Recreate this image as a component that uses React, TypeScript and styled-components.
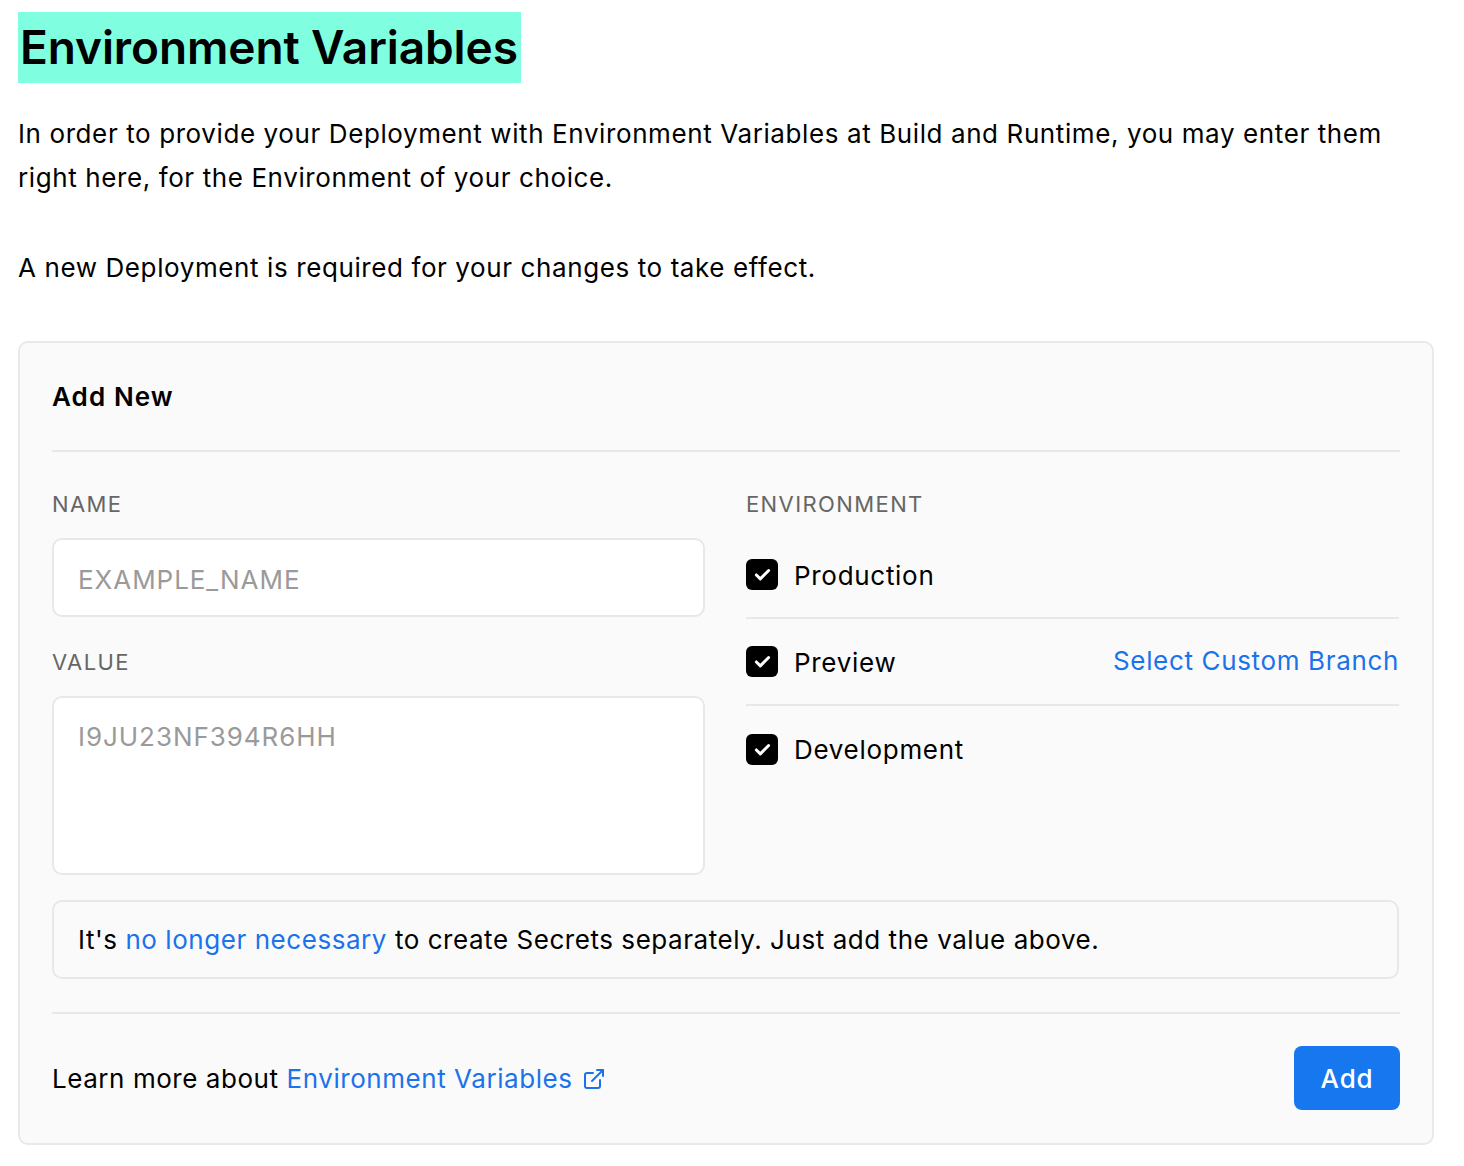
import React from "react";
import styled, { createGlobalStyle } from "styled-components";
import { ExternalLink } from "lucide-react";

const Global = createGlobalStyle`
  html, body { margin: 0; padding: 0; background: #fff; }
  body { font-family: Inter, "Noto Sans", sans-serif; color: #000; -webkit-font-smoothing: antialiased; }
  * { box-sizing: border-box; }
`;

const Page = styled.div`
  padding: 12px 0 0 18px;
  width: 1434px;
`;

const Title = styled.h1`
  display: inline-block;
  margin: 0;
  background: #7fffdf;
  font-size: 46px;
  font-weight: 600;
  line-height: 71px;
  letter-spacing: -0.1px;
  padding: 0 3px 0 2px;
`;

const Intro = styled.p`
  margin: 29px 0 0;
  font-size: 26px;
  line-height: 44px;
  letter-spacing: 0.6px;
  & + & { margin-top: 46px; }
`;

const Card = styled.section`
  margin-top: 51px;
  border: 2px solid #e9e9e9;
  border-radius: 10px;
  background: #fafafa;
  padding: 0 32px;
`;

const CardHeader = styled.div`
  height: 109px;
  display: flex;
  align-items: center;
  border-bottom: 2px solid #e8e8e8;
  font-size: 26px;
  font-weight: 600;
  letter-spacing: 1.1px;
`;

const Columns = styled.div`
  display: grid;
  grid-template-columns: 653px 653px;
  column-gap: 41px;
  padding-top: 37px;
`;

const Column = styled.div`
  display: flex;
  flex-direction: column;
`;

const Label = styled.div<{ $gap?: number }>`
  font-size: 22px;
  line-height: 30px;
  color: #666;
  letter-spacing: 1.4px;
  margin-top: ${(p) => p.$gap ?? 0}px;
  margin-bottom: 19px;
`;

const Input = styled.div<{ $tall?: boolean }>`
  height: ${(p) => (p.$tall ? 179 : 79)}px;
  background: #fff;
  border: 2px solid #e8e8e8;
  border-radius: 10px;
  padding: ${(p) => (p.$tall ? "19px 24px" : "4px 24px 0")};
  display: flex;
  align-items: ${(p) => (p.$tall ? "flex-start" : "center")};
  font-size: 26px;
  line-height: 40px;
  color: #9a9a9a;
  letter-spacing: 0.95px;
`;

const EnvList = styled.div`
  margin-top: -6px;
  display: flex;
  flex-direction: column;
`;

const EnvRow = styled.div<{ $last?: boolean }>`
  height: ${(p) => (p.$last ? 86 : 87)}px;
  display: flex;
  align-items: center;
  gap: 16px;
  border-bottom: ${(p) => (p.$last ? "none" : "2px solid #e8e8e8")};
  font-size: 26px;
`;

const Box = styled.span`
  width: 32px;
  height: 31px;
  border-radius: 6px;
  background: #000;
  display: inline-flex;
  align-items: center;
  justify-content: center;
  flex: none;
`;

const EnvName = styled.span`
  flex: 1;
  letter-spacing: 0.7px;
  margin-top: 1px;
`;

const Link = styled.a`
  color: #1a73eb;
  text-decoration: none;
`;

const BranchLink = styled(Link)`
  font-size: 26px;
  letter-spacing: 0.65px;
  margin-top: -3px;
`;

const Note = styled.div`
  grid-column: 1 / -1;
  margin-top: 25px;
  height: 79px;
  border: 2px solid #e8e8e8;
  border-radius: 10px;
  display: flex;
  align-items: center;
  padding: 0 24px;
  font-size: 26px;
  letter-spacing: 0.55px;
`;

const Footer = styled.div`
  margin-top: 33px;
  border-top: 2px solid #e8e8e8;
  height: 131px;
  display: flex;
  align-items: center;
  justify-content: space-between;
  font-size: 26px;
`;

const LearnMore = styled.div`
  display: flex;
  align-items: center;
  letter-spacing: 0.55px;
`;

const IconLink = styled(Link)`
  display: inline-flex;
  align-items: center;
  gap: 10px;
  margin-left: 8px;
`;

const AddButton = styled.button`
  width: 106px;
  height: 64px;
  border: none;
  border-radius: 8px;
  background: #1677ee;
  color: #fff;
  font-family: inherit;
  font-size: 26px;
  font-weight: 500;
  letter-spacing: 0.8px;
  margin-top: -1px;
`;

const Check = () => (
  <svg width="21" height="21" viewBox="0 0 24 24" fill="none" stroke="#fff" strokeWidth="3.4" strokeLinecap="round" strokeLinejoin="round">
    <path d="M5 12.5l4.5 4.5L19 7.5" />
  </svg>
);

const envs = ["Production", "Preview", "Development"];

export default function App() {
  return (
    <>
      <Global />
      <Page>
        <Title>Environment Variables</Title>
        <Intro>
          In order to provide your Deployment with Environment Variables at Build and Runtime, you may enter them right
          here, for the Environment of your choice.
        </Intro>
        <Intro>A new Deployment is required for your changes to take effect.</Intro>
        <Card>
          <CardHeader>Add New</CardHeader>
          <Columns>
            <Column>
              <Label>NAME</Label>
              <Input>EXAMPLE_NAME</Input>
              <Label $gap={30}>VALUE</Label>
              <Input $tall>I9JU23NF394R6HH</Input>
            </Column>
            <Column>
              <Label>ENVIRONMENT</Label>
              <EnvList>
                {envs.map((e, i) => (
                  <EnvRow key={e} $last={i === envs.length - 1}>
                    <Box>
                      <Check />
                    </Box>
                    <EnvName>{e}</EnvName>
                    {e === "Preview" && <BranchLink href="#">Select Custom Branch</BranchLink>}
                  </EnvRow>
                ))}
              </EnvList>
            </Column>
            <Note>
              It's&nbsp;<Link href="#">no longer necessary</Link>&nbsp;to create Secrets separately. Just add the value above.
            </Note>
          </Columns>
          <Footer>
            <LearnMore>
              Learn more about
              <IconLink href="#">
                Environment Variables
                <ExternalLink size={24} strokeWidth={2} />
              </IconLink>
            </LearnMore>
            <AddButton>Add</AddButton>
          </Footer>
        </Card>
      </Page>
    </>
  );
}
